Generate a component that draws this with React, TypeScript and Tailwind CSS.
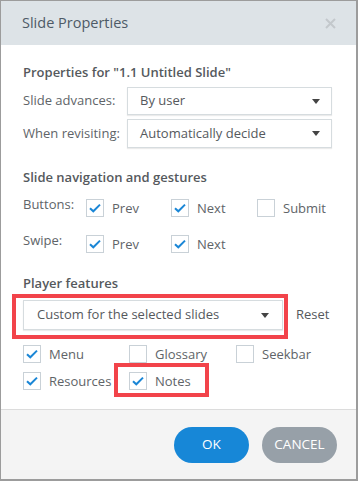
import React from "react";

const font = { fontFamily: '"Open Sans", "Noto Sans", sans-serif' };

function Check({ checked }: { checked: boolean }) {
  return (
    <span className="flex h-[18px] w-[18px] shrink-0 items-center justify-center border border-[#c9d1d7] bg-white">
      {checked && (
        <svg width="14" height="14" viewBox="0 0 14 14">
          <path d="M2 7.2 L5.3 10.3 L12 3.6" fill="none" stroke="#1a86d6" strokeWidth="2" />
        </svg>
      )}
    </span>
  );
}

function CheckItem({ checked, label, w }: { checked: boolean; label: string; w: string }) {
  return (
    <div className={`flex items-center gap-[8px] ${w}`}>
      <Check checked={checked} />
      <span className="text-[13px] leading-[18px] text-[#606468]">{label}</span>
    </div>
  );
}

function Select({ text, w, h, pl, pr }: { text: string; w: string; h: string; pl: string; pr: string }) {
  return (
    <div
      className={`flex items-center justify-between border border-[#d6dcdf] bg-white shadow-[0_1px_1px_rgba(0,0,0,0.08)] ${w} ${h} ${pl} ${pr}`}
    >
      <span className="text-[13px] text-[#55595d]">{text}</span>
      <svg width="8" height="5" viewBox="0 0 8 5">
        <path d="M0 0 L8 0 L4 5 Z" fill="#444" />
      </svg>
    </div>
  );
}

export default function App() {
  return (
    <div style={font} className="relative h-[481px] w-[358px] overflow-hidden bg-white">
      <div className="flex h-full w-full flex-col border-l border-t border-r-2 border-b-2 border-[#9c9c9c]">
        <div className="flex h-[44px] shrink-0 items-center justify-between bg-[#dde3e7] pl-[21px] pr-[20px]">
          <span className="text-[14.5px] text-[#4e5a66]">Slide Properties</span>
          <svg width="11" height="11" viewBox="0 0 11 11">
            <path d="M1 1 L10 10 M10 1 L1 10" stroke="#c3c8cc" strokeWidth="2" />
          </svg>
        </div>

        <div className="flex flex-1 flex-col pl-[22px]">
          <div className="mt-[17px] h-[20px] text-[13px] font-semibold leading-[20px] text-[#55595d]">
            Properties for "1.1 Untitled Slide"
          </div>
          <div className="mt-[5px] flex items-center">
            <span className="w-[104px] text-[13px] text-[#606468]">Slide advances:</span>
            <Select text="By user" w="w-[205px]" h="h-[28px]" pl="pl-[12px]" pr="pr-[11px]" />
          </div>
          <div className="mt-[4px] flex items-center">
            <span className="w-[104px] text-[13px] text-[#606468]">When revisiting:</span>
            <Select text="Automatically decide" w="w-[205px]" h="h-[29px]" pl="pl-[12px]" pr="pr-[11px]" />
          </div>

          <div className="mt-[19px] h-[20px] text-[13px] font-semibold leading-[20px] text-[#55595d]">
            Slide navigation and gestures
          </div>
          <div className="mt-[12px] flex">
            <span className="mt-[-4px] w-[63px] text-[13px] leading-[18px] text-[#606468]">Buttons:</span>
            <CheckItem checked label="Prev" w="w-[85px]" />
            <CheckItem checked label="Next" w="w-[86px]" />
            <CheckItem checked={false} label="Submit" w="w-[80px]" />
          </div>
          <div className="mt-[18px] flex">
            <span className="mt-[-4px] w-[63px] text-[13px] leading-[18px] text-[#606468]">Swipe:</span>
            <CheckItem checked label="Prev" w="w-[85px]" />
            <CheckItem checked label="Next" w="w-[86px]" />
          </div>

          <div className="mt-[20px] h-[20px] text-[13px] font-semibold leading-[20px] text-[#55595d]">
            Player features
          </div>
          <div className="mt-[7px] flex items-center">
            <Select text="Custom for the selected slides" w="w-[260px]" h="h-[30px]" pl="pl-[13px]" pr="pr-[13px]" />
            <span className="ml-[13px] text-[13px] text-[#55595d]">Reset</span>
          </div>
          <div className="mt-[15px] flex">
            <CheckItem checked label="Menu" w="w-[106px]" />
            <CheckItem checked={false} label="Glossary" w="w-[107px]" />
            <CheckItem checked={false} label="Seekbar" w="w-[90px]" />
          </div>
          <div className="mt-[9px] flex">
            <CheckItem checked label="Resources" w="w-[106px]" />
            <CheckItem checked label="Notes" w="w-[80px]" />
          </div>
        </div>

        <div className="flex h-[70px] shrink-0 items-center justify-end gap-[13px] border-t border-[#dcdcdc] bg-[#f4f4f4] pr-[19px]">
          <button className="h-[36px] w-[75px] rounded-full bg-[#1787d7] text-[13.5px] text-white">OK</button>
          <button className="h-[36px] w-[75px] rounded-full bg-[#97a0a8] text-[13.5px] text-white">CANCEL</button>
        </div>
      </div>

      <div className="pointer-events-none absolute left-[12px] top-[294px] h-[45px] w-[276px] border-4 border-[#f2434a]" />
      <div className="pointer-events-none absolute left-[114px] top-[363px] h-[34px] w-[95px] border-4 border-[#f2434a]" />
    </div>
  );
}
